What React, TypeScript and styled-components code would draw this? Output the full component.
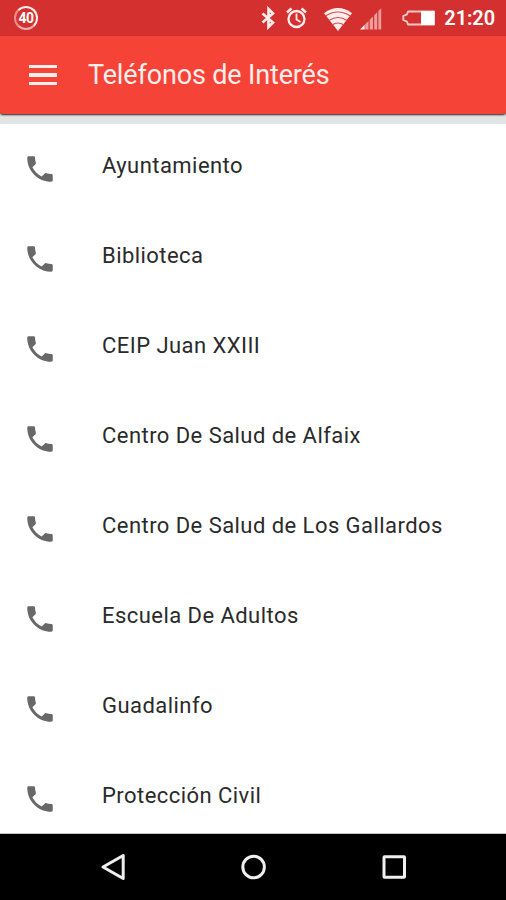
import React from 'react';
import styled, { createGlobalStyle } from 'styled-components';

const GlobalStyle = createGlobalStyle`
    * {
        box-sizing: border-box;
    }

    body {
        margin: 0;
        background: #fff;
        font-family: Roboto, 'Liberation Sans', sans-serif;
    }
`

const Screen = styled.div`
    display: flex;
    flex-direction: column;
    width: 506px;
    height: 900px;
    overflow: hidden;
    background: #e1e4e3;
`

const StatusBar = styled.div`
    display: flex;
    flex: none;
    align-items: center;
    justify-content: space-between;
    height: 36px;
    padding: 0 11px 0 14px;
    background: #d3302f;
    color: #fff;
`

const StatusIcons = styled.div`
    display: flex;
    align-items: center;

    svg {
        display: block;
    }
`

const Counter = styled.div`
    display: flex;
    align-items: center;
    justify-content: center;
    width: 24px;
    height: 24px;
    border: 2px solid #ffeeec;
    border-left-color: #e98f8d;
    border-bottom-color: #f0aeac;
    border-radius: 50%;
    font-size: 14px;
    font-weight: 700;
    letter-spacing: -0.5px;
`

const Clock = styled.span`
    margin-left: 9px;
    font-size: 20px;
    font-weight: 600;
    line-height: 38px;
    letter-spacing: -0.1px;
`

const AppBar = styled.header`
    position: relative;
    display: flex;
    flex: none;
    align-items: center;
    height: 78px;
    padding-left: 29px;
    border-radius: 0 0 3px 3px;
    background: #f64337;
    box-shadow: 0 1px 2px rgba(0, 0, 0, 0.85);
`

const MenuButton = styled.button`
    display: flex;
    flex-direction: column;
    gap: 5px;
    width: 28px;
    padding: 0;
    border: 0;
    background: none;
`

const MenuLine = styled.span`
    height: 3.5px;
    background: #ffeeeb;
`

const Title = styled.h1`
    margin: 0 0 0 31px;
    color: #ffeeeb;
    font-size: 27px;
    font-weight: 400;
    line-height: 36px;
    letter-spacing: -0.15px;
`

const List = styled.ul`
    flex: 1;
    min-height: 0;
    margin: 10px 0 0;
    padding: 0;
    overflow: hidden;
    border-bottom: 1px solid #c4c4c4;
    background: #fff;
    list-style: none;
`

const Row = styled.li`
    display: flex;
    align-items: flex-start;
    height: 90px;
    padding: 28px 0 0 23px;
`

const PhoneIcon = styled.svg`
    flex: none;
    width: 34px;
    height: 34px;
    fill: #686868;
`

const Name = styled.span`
    margin-left: 45px;
    color: #2a2a2a;
    font-size: 22px;
    line-height: 28px;
    letter-spacing: 0.45px;
    white-space: nowrap;
`

const NavBar = styled.nav`
    display: flex;
    flex: none;
    align-items: center;
    justify-content: space-between;
    height: 66px;
    padding: 0 98px 0 99px;
    background: #000;
`

const NavIcon = styled.svg`
    display: block;
    width: 28px;
    height: 28px;
    fill: none;
    stroke: #efefef;
    stroke-width: 3;
    stroke-linejoin: round;
`

const contacts: string[] = [
    'Ayuntamiento',
    'Biblioteca',
    'CEIP Juan XXIII',
    'Centro De Salud de Alfaix',
    'Centro De Salud de Los Gallardos',
    'Escuela De Adultos',
    'Guadalinfo',
    'Protección Civil',
]

interface ContactProps {
    name: string;
}

function Contact( { name }: ContactProps ): JSX.Element {
    return (
        <Row>
            <PhoneIcon viewBox='0 0 24 24'>
                <path d='M6.62 10.79c1.44 2.83 3.76 5.14 6.59 6.59l2.2-2.2c.27-.27.67-.36 1.02-.24 1.12.37 2.33.57 3.57.57.55 0 1 .45 1 1V20c0 .55-.45 1-1 1-9.39 0-17-7.61-17-17 0-.55.45-1 1-1h3.5c.55 0 1 .45 1 1 0 1.25.2 2.45.57 3.57.11.35.03.74-.25 1.02l-2.2 2.2z'/>
            </PhoneIcon>
            <Name>{name}</Name>
        </Row>
    )
}

function StatusBarIcons(): JSX.Element {
    return (
        <StatusIcons>
            {/* bluetooth, alarm, wifi, signal and battery share one 36px high strip */}
            <svg width='175' height='36' viewBox='260 0 175 36' fill='none' stroke='#ffeeec'>
                <path d='M262.5 13.5l10.5 9-4.5 4.5v-18l4.5 4.5-10.5 9' strokeWidth='2.6'/>
                <circle cx='296.5' cy='19' r='8' strokeWidth='2.3'/>
                <path d='M296.5 13.5v6l4 2.5' strokeWidth='1.8'/>
                <path d='M287 12.5l4.5-4M306 12.5l-4.5-4' strokeWidth='2.6'/>
                <path d='M324 13.2Q338 3 352 13.2L338 31z' fill='#ffeeec' stroke='none'/>
                <path d='M325.5 16Q338 8 350.5 16M329 20.5Q338 14.5 347 20.5M332 25Q338 21 344 25'
                      stroke='#dc4a48' strokeWidth='1.2'/>
                <path d='M360 29.5l4.7-4.7v4.7z' fill='#ffeeec' stroke='none'/>
                <path d='M365.2 24.3l3.3-3.3v8.5h-3.3zM369.7 19.8l3.3-3.3v13h-3.3zM374.2 15.3l3-3v17.2h-3zM378.4 11.1l2.8-2.8v21.2h-2.8z'
                      fill='#ed9d9b' stroke='none'/>
                <path d='M408 11.5h26v13h-26l-1-2.8-3.7-1.7v-4l3.7-1.7z' stroke='#f6c9c7' strokeWidth='1.9'
                      strokeLinejoin='round'/>
                <path d='M421 11h13.5v14H421z' fill='#fff' stroke='none'/>
            </svg>
            <Clock>21:20</Clock>
        </StatusIcons>
    )
}

function App(): JSX.Element {
    return (
        <Screen>
            <GlobalStyle/>
            <StatusBar>
                <Counter>40</Counter>
                <StatusBarIcons/>
            </StatusBar>
            <AppBar>
                <MenuButton type='button' aria-label='Menú'>
                    <MenuLine/>
                    <MenuLine/>
                    <MenuLine/>
                </MenuButton>
                <Title>Teléfonos de Interés</Title>
            </AppBar>
            <List>
                {contacts.map( name => <Contact key={name} name={name}/> )}
            </List>
            <NavBar>
                <NavIcon viewBox='0 0 28 28'>
                    <path d='M24.2 2.5v23L4 14z'/>
                </NavIcon>
                <NavIcon viewBox='0 0 28 28'>
                    <circle cx='13.6' cy='14' r='10.8'/>
                </NavIcon>
                <NavIcon viewBox='0 0 28 28'>
                    <rect x='4' y='3.7' width='20.5' height='20.5' rx='0.5'/>
                </NavIcon>
            </NavBar>
        </Screen>
    )
}

export default App;
